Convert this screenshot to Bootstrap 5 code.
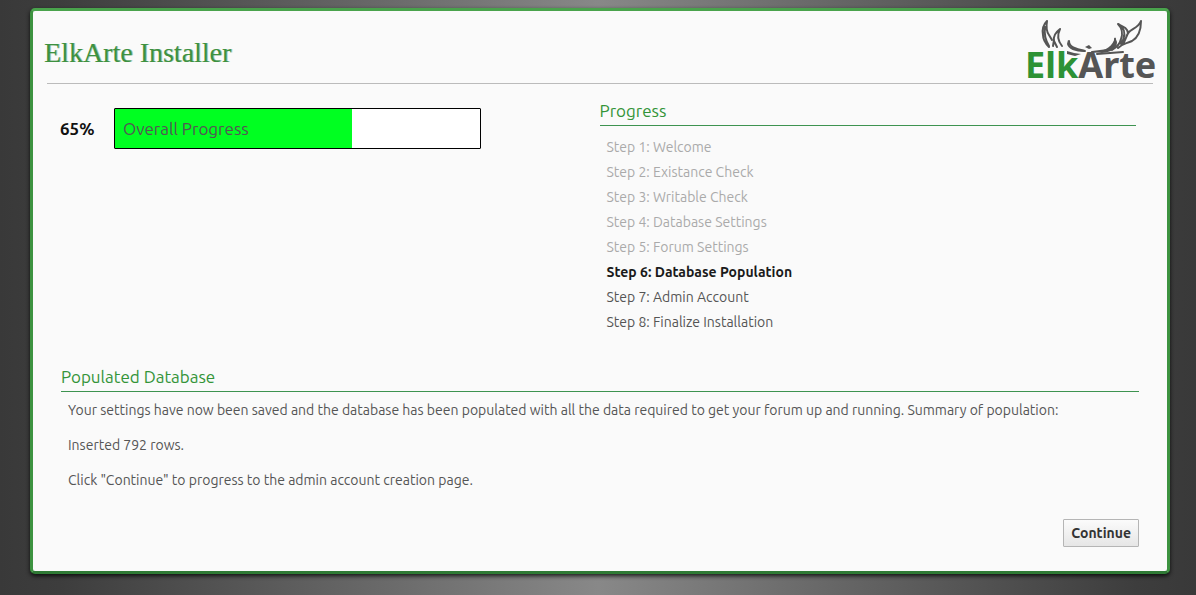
<!DOCTYPE html>
<html lang="en">
<head>
<meta charset="utf-8">
<meta name="viewport" content="width=device-width, initial-scale=1">
<title>ElkArte Installer</title>
<link href="https://cdn.jsdelivr.net/npm/bootstrap@5.3.0/dist/css/bootstrap.min.css" rel="stylesheet">
<style>
body {
  min-height: 100vh;
  padding: 8px 26px 20px 30px;
  background: linear-gradient(90deg, #393939 0%, #3d3d3d 5%, #666 30%, #888 50%, #666 70%, #3d3d3d 95%, #393939 100%) fixed;
  color: #555;
  font-family: Ubuntu, "Open Sans", "Noto Sans", sans-serif;
  font-size: 14px;
  line-height: 20px;
}
.frame {
  border: 3px solid #3d9340;
  border-top-color: #49a34c;
  border-bottom-color: #2f7a35;
  border-radius: 5px;
  background: #fafafa;
  box-shadow: 0 2px 4px rgba(0, 0, 0, .8);
  padding: 0 14px 24px;
}
.top-bar { height: 73px; border-bottom: 1px solid #bbb; }
.top-bar h1 {
  margin: 0 0 0 -3px;
  padding-top: 25px;
  color: #3d9140;
  font: 28px/34px "Liberation Serif", serif;
  text-shadow: 1px 0 0 #a4c8ae;
}
.logo { margin: 6px -5px 0 0; }
.content-area { padding: 16px 14px 0 13px; }
.percent { width: 54px; font-size: 17px; color: #111; }
.meter { width: 68%; height: 41px; border: 1px solid #000; border-radius: 1px; background: #fff; font-size: 17px; }
.meter-bar { background: #00ff21; height: 100%; }
.meter-label { padding-left: 8px; }
.progress-col { padding-right: 3px; }
.section-title {
  margin: 0;
  padding-bottom: 3px;
  border-bottom: 1px solid #3d9350;
  color: #339438;
  font-size: 17px;
  font-weight: 400;
  line-height: 22px;
}
.steps { padding: 9px 7px 0; line-height: 25px; }
.steps .done { color: #aaa; }
.steps .current { color: #1a1a1a; font-weight: 700; }
.result { margin-top: 31px; margin-left: 1px; }
.result p { margin: 0 7px 15px; }
.result p:first-of-type { margin-top: 8px; }
.btn-go {
  margin-top: 14px;
  height: 28px;
  padding: 0 7px;
  border: 1px solid #b5b5b5;
  border-radius: 1px;
  background: linear-gradient(#fbfbfb, #e6e6e6);
  color: #333;
  font-size: 14px;
  font-weight: 700;
  line-height: 26px;
}
</style>
</head>
<body>
<main class="frame">
  <header class="top-bar d-flex justify-content-between align-items-start">
    <h1>ElkArte Installer</h1>
    <svg class="logo flex-shrink-0" width="134" height="66" viewBox="0 0 134 66" overflow="visible" role="img" aria-label="ElkArte">
      <g fill="none" stroke="#555" stroke-width="2" stroke-linejoin="round" stroke-linecap="round">
        <path d="M23 4C19 8 18 13 19 18 19 23 22 27 25 30M23 4C22 10 22 14 25 18L28 23M21 10C20 17 22 24 25 29"/>
        <path d="M36 12C32 15 29 19 30 24L33 30M36 12C33 18 34 24 38 29M30 23L29 29"/>
        <path d="M45 24C45 30 51 32 61 34"/>
        <path d="M117 4C115 10 108 12 105 15 102 18 102 24 98 28M117 4C117 13 115 20 108 24 102 27 99 26 94 31M94 7C98 11 99 17 97 22 96 27 93 30 88 33M94 7C100 10 103 11 104 16M98 10C102 15 100 22 97 27"/>
        <path d="M91 22C92 28 90 31 84 33L68 35M73 37L99 35"/>
      </g>
      <path fill="#555" d="M44 23L46 29 52 32 61 33V35C51 35 44 32 43 27ZM61 30L65 28 68 31 65 32ZM43 34L50 36 57 37 51 39 43 37ZM91 20L93 25C93 31 88 35 78 36L70 35C82 34 89 29 91 20Z"/>
      <text x="1" y="61" font-family="Noto Sans, Open Sans, sans-serif" font-size="36" font-weight="700"><tspan fill="#2d9235">Elk</tspan><tspan fill="#555">Arte</tspan></text>
    </svg>
  </header>

  <div class="content-area">
    <div class="row g-0">
      <div class="col-6 d-flex align-items-start pt-2">
        <div class="d-flex align-items-center w-100">
          <strong class="percent flex-shrink-0">65%</strong>
          <div class="meter position-relative" role="progressbar" aria-labelledby="meter-label" aria-valuenow="65" aria-valuemin="0" aria-valuemax="100">
            <div class="meter-bar" style="width: 65%"></div>
            <span class="meter-label position-absolute top-50 translate-middle-y start-0" id="meter-label">Overall Progress</span>
          </div>
        </div>
      </div>
      <div class="col-6 progress-col">
        <h2 class="section-title">Progress</h2>
        <ul class="steps list-unstyled mb-0">
          <li class="done">Step 1: Welcome</li>
          <li class="done">Step 2: Existance Check</li>
          <li class="done">Step 3: Writable Check</li>
          <li class="done">Step 4: Database Settings</li>
          <li class="done">Step 5: Forum Settings</li>
          <li class="current">Step 6: Database Population</li>
          <li>Step 7: Admin Account</li>
          <li>Step 8: Finalize Installation</li>
        </ul>
      </div>
    </div>

    <section class="result">
      <h2 class="section-title">Populated Database</h2>
      <p>Your settings have now been saved and the database has been populated with all the data required to get your forum up and running. Summary of population:</p>
      <p>Inserted 792 rows.</p>
      <p>Click "Continue" to progress to the admin account creation page.</p>
      <form class="d-flex justify-content-end">
        <button type="button" class="btn btn-go">Continue</button>
      </form>
    </section>
  </div>
</main>
<script src="https://cdn.jsdelivr.net/npm/bootstrap@5.3.0/dist/js/bootstrap.bundle.min.js"></script>
</body>
</html>
